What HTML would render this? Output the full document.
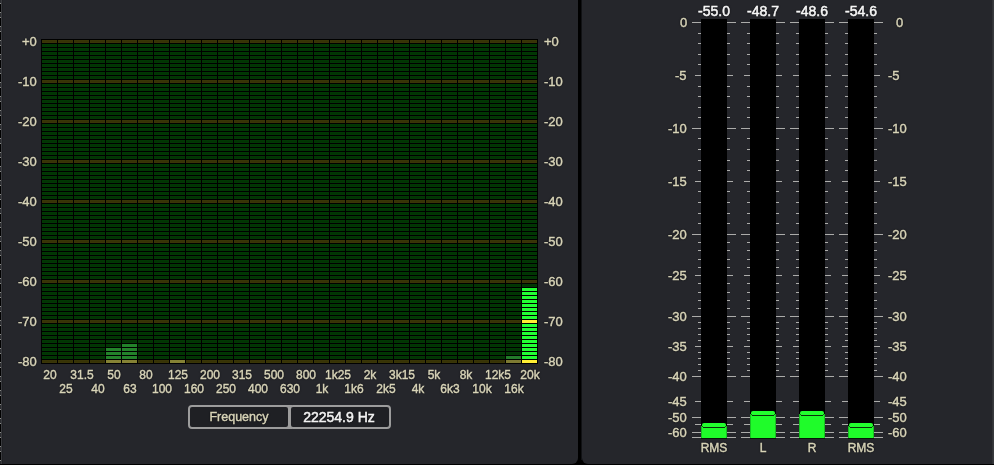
<!DOCTYPE html><html><head><meta charset="utf-8"><style>html,body{margin:0;padding:0;}body{width:994px;height:465px;position:relative;overflow:hidden;background:#000;font-family:"Liberation Sans",sans-serif;}.t{position:absolute;line-height:14px;white-space:nowrap;text-shadow:0 0 2px #000;will-change:transform;-webkit-text-stroke:0.4px currentColor;}.p{position:absolute;background:#25262b;}.k{position:absolute;height:1px;background:#acacaa;}</style></head><body>
<div class="p" style="left:2px;top:0;width:576px;height:464px;border-radius:0 0 6px 0;box-shadow:inset 1px 0 0 #202125"></div>
<div class="p" style="left:582px;top:0;width:412px;height:464px;border-radius:0 0 0 6px"></div>
<div style="position:absolute;left:581px;top:0;width:1px;height:460px;background:#111215"></div>
<div style="position:absolute;left:992px;top:0;width:2px;height:464px;background:linear-gradient(90deg,#2e2f33,#3c3d41)"></div>
<div style="position:absolute;left:1px;top:0;width:1px;height:464px;background:#3a3b3f"></div>
<div style="position:absolute;left:0;top:0;width:1px;height:464px;background:repeating-linear-gradient(180deg,#2a2b2f 0px,#2a2b2f 3px,#8a8a88 3px,#8a8a88 4px,#000 4px,#000 12px,#8a8a88 12px,#8a8a88 13px,#2a2b2f 13px,#2a2b2f 14px)"></div>
<svg width="497" height="325" style="position:absolute;left:41px;top:39px" shape-rendering="crispEdges"><defs><pattern id="pg" x="1" y="1" width="16" height="4" patternUnits="userSpaceOnUse"><rect x="0" y="0" width="15" height="3" fill="#023804"/><rect x="1" y="1" width="13" height="1" fill="#013503"/></pattern><pattern id="py" x="1" y="1" width="16" height="4" patternUnits="userSpaceOnUse"><rect x="0" y="0" width="15" height="3" fill="#3a3607"/><rect x="1" y="1" width="13" height="1" fill="#373306"/></pattern></defs><rect width="497" height="325" fill="#000"/><rect x="1" y="1" width="495" height="324" fill="url(#pg)"/><rect x="1" y="1" width="495" height="3" fill="url(#py)"/><rect x="1" y="41" width="495" height="3" fill="url(#py)"/><rect x="1" y="81" width="495" height="3" fill="url(#py)"/><rect x="1" y="121" width="495" height="3" fill="url(#py)"/><rect x="1" y="161" width="495" height="3" fill="url(#py)"/><rect x="1" y="201" width="495" height="3" fill="url(#py)"/><rect x="1" y="241" width="495" height="3" fill="url(#py)"/><rect x="1" y="281" width="495" height="3" fill="url(#py)"/><rect x="1" y="321" width="495" height="3" fill="url(#py)"/><rect x="65" y="309" width="15" height="3" fill="#23822a"/><rect x="65" y="313" width="15" height="3" fill="#23822a"/><rect x="65" y="317" width="15" height="3" fill="#23822a"/><rect x="65" y="321" width="15" height="3" fill="#858234"/><rect x="81" y="305" width="15" height="3" fill="#23822a"/><rect x="81" y="309" width="15" height="3" fill="#23822a"/><rect x="81" y="313" width="15" height="3" fill="#23822a"/><rect x="81" y="317" width="15" height="3" fill="#23822a"/><rect x="81" y="321" width="15" height="3" fill="#858234"/><rect x="129" y="321" width="15" height="3" fill="#858234"/><rect x="465" y="317" width="15" height="3" fill="#237a2a"/><rect x="465" y="321" width="15" height="3" fill="#7d7a32"/><rect x="481" y="249" width="15" height="3" fill="#22ff33"/><rect x="481" y="253" width="15" height="3" fill="#22ff33"/><rect x="481" y="257" width="15" height="3" fill="#22ff33"/><rect x="481" y="261" width="15" height="3" fill="#22ff33"/><rect x="481" y="265" width="15" height="3" fill="#22ff33"/><rect x="481" y="269" width="15" height="3" fill="#22ff33"/><rect x="481" y="273" width="15" height="3" fill="#22ff33"/><rect x="481" y="277" width="15" height="3" fill="#22ff33"/><rect x="481" y="281" width="15" height="3" fill="#ffee33"/><rect x="481" y="285" width="15" height="3" fill="#22ff33"/><rect x="481" y="289" width="15" height="3" fill="#22ff33"/><rect x="481" y="293" width="15" height="3" fill="#22ff33"/><rect x="481" y="297" width="15" height="3" fill="#22ff33"/><rect x="481" y="301" width="15" height="3" fill="#22ff33"/><rect x="481" y="305" width="15" height="3" fill="#22ff33"/><rect x="481" y="309" width="15" height="3" fill="#22ff33"/><rect x="481" y="313" width="15" height="3" fill="#22ff33"/><rect x="481" y="317" width="15" height="3" fill="#22ff33"/><rect x="481" y="321" width="15" height="3" fill="#ffee33"/></svg>
<div class="t" style="right:957px;top:35px;font-size:13px;color:#d8d4b8;font-weight:normal;">+0</div>
<div class="t" style="left:544px;top:35px;font-size:13px;color:#d8d4b8;font-weight:normal;">+0</div>
<div class="t" style="right:957px;top:75px;font-size:13px;color:#d8d4b8;font-weight:normal;">-10</div>
<div class="t" style="left:544px;top:75px;font-size:13px;color:#d8d4b8;font-weight:normal;">-10</div>
<div class="t" style="right:957px;top:115px;font-size:13px;color:#d8d4b8;font-weight:normal;">-20</div>
<div class="t" style="left:544px;top:115px;font-size:13px;color:#d8d4b8;font-weight:normal;">-20</div>
<div class="t" style="right:957px;top:155px;font-size:13px;color:#d8d4b8;font-weight:normal;">-30</div>
<div class="t" style="left:544px;top:155px;font-size:13px;color:#d8d4b8;font-weight:normal;">-30</div>
<div class="t" style="right:957px;top:195px;font-size:13px;color:#d8d4b8;font-weight:normal;">-40</div>
<div class="t" style="left:544px;top:195px;font-size:13px;color:#d8d4b8;font-weight:normal;">-40</div>
<div class="t" style="right:957px;top:235px;font-size:13px;color:#d8d4b8;font-weight:normal;">-50</div>
<div class="t" style="left:544px;top:235px;font-size:13px;color:#d8d4b8;font-weight:normal;">-50</div>
<div class="t" style="right:957px;top:275px;font-size:13px;color:#d8d4b8;font-weight:normal;">-60</div>
<div class="t" style="left:544px;top:275px;font-size:13px;color:#d8d4b8;font-weight:normal;">-60</div>
<div class="t" style="right:957px;top:315px;font-size:13px;color:#d8d4b8;font-weight:normal;">-70</div>
<div class="t" style="left:544px;top:315px;font-size:13px;color:#d8d4b8;font-weight:normal;">-70</div>
<div class="t" style="right:957px;top:355px;font-size:13px;color:#d8d4b8;font-weight:normal;">-80</div>
<div class="t" style="left:544px;top:355px;font-size:13px;color:#d8d4b8;font-weight:normal;">-80</div>
<div class="t" style="left:-0.5px;width:100px;text-align:center;top:368px;font-size:12px;color:#d8d4b8;font-weight:normal;">20</div>
<div class="t" style="left:15.5px;width:100px;text-align:center;top:382px;font-size:12px;color:#d8d4b8;font-weight:normal;">25</div>
<div class="t" style="left:31.5px;width:100px;text-align:center;top:368px;font-size:12px;color:#d8d4b8;font-weight:normal;">31.5</div>
<div class="t" style="left:47.5px;width:100px;text-align:center;top:382px;font-size:12px;color:#d8d4b8;font-weight:normal;">40</div>
<div class="t" style="left:63.5px;width:100px;text-align:center;top:368px;font-size:12px;color:#d8d4b8;font-weight:normal;">50</div>
<div class="t" style="left:79.5px;width:100px;text-align:center;top:382px;font-size:12px;color:#d8d4b8;font-weight:normal;">63</div>
<div class="t" style="left:95.5px;width:100px;text-align:center;top:368px;font-size:12px;color:#d8d4b8;font-weight:normal;">80</div>
<div class="t" style="left:111.5px;width:100px;text-align:center;top:382px;font-size:12px;color:#d8d4b8;font-weight:normal;">100</div>
<div class="t" style="left:127.5px;width:100px;text-align:center;top:368px;font-size:12px;color:#d8d4b8;font-weight:normal;">125</div>
<div class="t" style="left:143.5px;width:100px;text-align:center;top:382px;font-size:12px;color:#d8d4b8;font-weight:normal;">160</div>
<div class="t" style="left:159.5px;width:100px;text-align:center;top:368px;font-size:12px;color:#d8d4b8;font-weight:normal;">200</div>
<div class="t" style="left:175.5px;width:100px;text-align:center;top:382px;font-size:12px;color:#d8d4b8;font-weight:normal;">250</div>
<div class="t" style="left:191.5px;width:100px;text-align:center;top:368px;font-size:12px;color:#d8d4b8;font-weight:normal;">315</div>
<div class="t" style="left:207.5px;width:100px;text-align:center;top:382px;font-size:12px;color:#d8d4b8;font-weight:normal;">400</div>
<div class="t" style="left:223.5px;width:100px;text-align:center;top:368px;font-size:12px;color:#d8d4b8;font-weight:normal;">500</div>
<div class="t" style="left:239.5px;width:100px;text-align:center;top:382px;font-size:12px;color:#d8d4b8;font-weight:normal;">630</div>
<div class="t" style="left:255.5px;width:100px;text-align:center;top:368px;font-size:12px;color:#d8d4b8;font-weight:normal;">800</div>
<div class="t" style="left:271.5px;width:100px;text-align:center;top:382px;font-size:12px;color:#d8d4b8;font-weight:normal;">1k</div>
<div class="t" style="left:287.5px;width:100px;text-align:center;top:368px;font-size:12px;color:#d8d4b8;font-weight:normal;">1k25</div>
<div class="t" style="left:303.5px;width:100px;text-align:center;top:382px;font-size:12px;color:#d8d4b8;font-weight:normal;">1k6</div>
<div class="t" style="left:319.5px;width:100px;text-align:center;top:368px;font-size:12px;color:#d8d4b8;font-weight:normal;">2k</div>
<div class="t" style="left:335.5px;width:100px;text-align:center;top:382px;font-size:12px;color:#d8d4b8;font-weight:normal;">2k5</div>
<div class="t" style="left:351.5px;width:100px;text-align:center;top:368px;font-size:12px;color:#d8d4b8;font-weight:normal;">3k15</div>
<div class="t" style="left:367.5px;width:100px;text-align:center;top:382px;font-size:12px;color:#d8d4b8;font-weight:normal;">4k</div>
<div class="t" style="left:383.5px;width:100px;text-align:center;top:368px;font-size:12px;color:#d8d4b8;font-weight:normal;">5k</div>
<div class="t" style="left:399.5px;width:100px;text-align:center;top:382px;font-size:12px;color:#d8d4b8;font-weight:normal;">6k3</div>
<div class="t" style="left:415.5px;width:100px;text-align:center;top:368px;font-size:12px;color:#d8d4b8;font-weight:normal;">8k</div>
<div class="t" style="left:431.5px;width:100px;text-align:center;top:382px;font-size:12px;color:#d8d4b8;font-weight:normal;">10k</div>
<div class="t" style="left:447.5px;width:100px;text-align:center;top:368px;font-size:12px;color:#d8d4b8;font-weight:normal;">12k5</div>
<div class="t" style="left:463.5px;width:100px;text-align:center;top:382px;font-size:12px;color:#d8d4b8;font-weight:normal;">16k</div>
<div class="t" style="left:479.5px;width:100px;text-align:center;top:368px;font-size:12px;color:#d8d4b8;font-weight:normal;">20k</div>
<div style="position:absolute;left:286px;top:405px;width:6px;height:24px;background:#9c9c9c"></div>
<div style="position:absolute;left:188px;top:405px;width:98px;height:20px;border:2px solid #9c9c9c;border-radius:4px;background:#1f2024"></div>
<div style="position:absolute;left:289px;top:405px;width:98px;height:20px;border:2px solid #9c9c9c;border-radius:4px;background:#1f2024"></div>
<div class="t" style="left:188.5px;width:100px;text-align:center;top:410px;font-size:12.5px;color:#d8d4b8;font-weight:normal;">Frequency</div>
<div class="t" style="left:289px;width:100px;text-align:center;top:410px;font-size:14px;color:#f2f2f2;font-weight:normal;-webkit-text-stroke:0.5px #f2f2f2;">22254.9 Hz</div>
<div style="position:absolute;left:701px;top:19px;width:26px;height:420px;background:#000"></div>
<div class="t" style="left:664px;width:100px;text-align:center;top:4px;font-size:14px;color:#f6f6f6;font-weight:normal;-webkit-text-stroke:0.5px #f6f6f6;">-55.0</div>
<div class="t" style="left:664px;width:100px;text-align:center;top:441px;font-size:12px;color:#d8d4b8;font-weight:normal;">RMS</div>
<div style="position:absolute;left:701px;top:426px;width:26px;height:13px;background:#1ffc2a;box-shadow:inset 0 -1px 0 #061806,inset 1px 0 0 #18c022,inset -1px 0 0 #18c022"></div>
<div style="position:absolute;left:702px;top:423px;width:24px;height:4px;background:#22ff2e;border-radius:2px 2px 0 0"></div>
<div style="position:absolute;left:703px;top:427px;width:22px;height:1px;background:#0a300a"></div>
<div style="position:absolute;left:702px;top:426px;width:1px;height:1px;background:#0f6a12"></div>
<div style="position:absolute;left:725px;top:426px;width:1px;height:1px;background:#0f6a12"></div>
<div style="position:absolute;left:750px;top:19px;width:26px;height:420px;background:#000"></div>
<div class="t" style="left:713px;width:100px;text-align:center;top:4px;font-size:14px;color:#f6f6f6;font-weight:normal;-webkit-text-stroke:0.5px #f6f6f6;">-48.7</div>
<div class="t" style="left:713px;width:100px;text-align:center;top:441px;font-size:12px;color:#d8d4b8;font-weight:normal;">L</div>
<div style="position:absolute;left:750px;top:414px;width:26px;height:25px;background:#1ffc2a;box-shadow:inset 0 -1px 0 #061806,inset 1px 0 0 #18c022,inset -1px 0 0 #18c022"></div>
<div style="position:absolute;left:751px;top:411px;width:24px;height:4px;background:#22ff2e;border-radius:2px 2px 0 0"></div>
<div style="position:absolute;left:752px;top:415px;width:22px;height:1px;background:#0a300a"></div>
<div style="position:absolute;left:751px;top:414px;width:1px;height:1px;background:#0f6a12"></div>
<div style="position:absolute;left:774px;top:414px;width:1px;height:1px;background:#0f6a12"></div>
<div style="position:absolute;left:799px;top:19px;width:26px;height:420px;background:#000"></div>
<div class="t" style="left:762px;width:100px;text-align:center;top:4px;font-size:14px;color:#f6f6f6;font-weight:normal;-webkit-text-stroke:0.5px #f6f6f6;">-48.6</div>
<div class="t" style="left:762px;width:100px;text-align:center;top:441px;font-size:12px;color:#d8d4b8;font-weight:normal;">R</div>
<div style="position:absolute;left:799px;top:414px;width:26px;height:25px;background:#1ffc2a;box-shadow:inset 0 -1px 0 #061806,inset 1px 0 0 #18c022,inset -1px 0 0 #18c022"></div>
<div style="position:absolute;left:800px;top:411px;width:24px;height:4px;background:#22ff2e;border-radius:2px 2px 0 0"></div>
<div style="position:absolute;left:801px;top:415px;width:22px;height:1px;background:#0a300a"></div>
<div style="position:absolute;left:800px;top:414px;width:1px;height:1px;background:#0f6a12"></div>
<div style="position:absolute;left:823px;top:414px;width:1px;height:1px;background:#0f6a12"></div>
<div style="position:absolute;left:848px;top:19px;width:26px;height:420px;background:#000"></div>
<div class="t" style="left:811px;width:100px;text-align:center;top:4px;font-size:14px;color:#f6f6f6;font-weight:normal;-webkit-text-stroke:0.5px #f6f6f6;">-54.6</div>
<div class="t" style="left:811px;width:100px;text-align:center;top:441px;font-size:12px;color:#d8d4b8;font-weight:normal;">RMS</div>
<div style="position:absolute;left:848px;top:426px;width:26px;height:13px;background:#1ffc2a;box-shadow:inset 0 -1px 0 #061806,inset 1px 0 0 #18c022,inset -1px 0 0 #18c022"></div>
<div style="position:absolute;left:849px;top:423px;width:24px;height:4px;background:#22ff2e;border-radius:2px 2px 0 0"></div>
<div style="position:absolute;left:850px;top:427px;width:22px;height:1px;background:#0a300a"></div>
<div style="position:absolute;left:849px;top:426px;width:1px;height:1px;background:#0f6a12"></div>
<div style="position:absolute;left:872px;top:426px;width:1px;height:1px;background:#0f6a12"></div>
<div class="k" style="left:692px;top:22px;width:9px"></div>
<div class="k" style="left:727px;top:22px;width:9px"></div>
<div class="k" style="left:741px;top:22px;width:9px"></div>
<div class="k" style="left:776px;top:22px;width:9px"></div>
<div class="k" style="left:790px;top:22px;width:9px"></div>
<div class="k" style="left:825px;top:22px;width:9px"></div>
<div class="k" style="left:839px;top:22px;width:9px"></div>
<div class="k" style="left:874px;top:22px;width:9px"></div>
<div class="k" style="left:698px;top:33px;width:3px"></div>
<div class="k" style="left:727px;top:33px;width:3px"></div>
<div class="k" style="left:747px;top:33px;width:3px"></div>
<div class="k" style="left:776px;top:33px;width:3px"></div>
<div class="k" style="left:796px;top:33px;width:3px"></div>
<div class="k" style="left:825px;top:33px;width:3px"></div>
<div class="k" style="left:845px;top:33px;width:3px"></div>
<div class="k" style="left:874px;top:33px;width:3px"></div>
<div class="k" style="left:698px;top:43px;width:3px"></div>
<div class="k" style="left:727px;top:43px;width:3px"></div>
<div class="k" style="left:747px;top:43px;width:3px"></div>
<div class="k" style="left:776px;top:43px;width:3px"></div>
<div class="k" style="left:796px;top:43px;width:3px"></div>
<div class="k" style="left:825px;top:43px;width:3px"></div>
<div class="k" style="left:845px;top:43px;width:3px"></div>
<div class="k" style="left:874px;top:43px;width:3px"></div>
<div class="k" style="left:698px;top:54px;width:3px"></div>
<div class="k" style="left:727px;top:54px;width:3px"></div>
<div class="k" style="left:747px;top:54px;width:3px"></div>
<div class="k" style="left:776px;top:54px;width:3px"></div>
<div class="k" style="left:796px;top:54px;width:3px"></div>
<div class="k" style="left:825px;top:54px;width:3px"></div>
<div class="k" style="left:845px;top:54px;width:3px"></div>
<div class="k" style="left:874px;top:54px;width:3px"></div>
<div class="k" style="left:698px;top:64px;width:3px"></div>
<div class="k" style="left:727px;top:64px;width:3px"></div>
<div class="k" style="left:747px;top:64px;width:3px"></div>
<div class="k" style="left:776px;top:64px;width:3px"></div>
<div class="k" style="left:796px;top:64px;width:3px"></div>
<div class="k" style="left:825px;top:64px;width:3px"></div>
<div class="k" style="left:845px;top:64px;width:3px"></div>
<div class="k" style="left:874px;top:64px;width:3px"></div>
<div class="k" style="left:695px;top:75px;width:6px"></div>
<div class="k" style="left:727px;top:75px;width:6px"></div>
<div class="k" style="left:744px;top:75px;width:6px"></div>
<div class="k" style="left:776px;top:75px;width:6px"></div>
<div class="k" style="left:793px;top:75px;width:6px"></div>
<div class="k" style="left:825px;top:75px;width:6px"></div>
<div class="k" style="left:842px;top:75px;width:6px"></div>
<div class="k" style="left:874px;top:75px;width:6px"></div>
<div class="k" style="left:698px;top:86px;width:3px"></div>
<div class="k" style="left:727px;top:86px;width:3px"></div>
<div class="k" style="left:747px;top:86px;width:3px"></div>
<div class="k" style="left:776px;top:86px;width:3px"></div>
<div class="k" style="left:796px;top:86px;width:3px"></div>
<div class="k" style="left:825px;top:86px;width:3px"></div>
<div class="k" style="left:845px;top:86px;width:3px"></div>
<div class="k" style="left:874px;top:86px;width:3px"></div>
<div class="k" style="left:698px;top:96px;width:3px"></div>
<div class="k" style="left:727px;top:96px;width:3px"></div>
<div class="k" style="left:747px;top:96px;width:3px"></div>
<div class="k" style="left:776px;top:96px;width:3px"></div>
<div class="k" style="left:796px;top:96px;width:3px"></div>
<div class="k" style="left:825px;top:96px;width:3px"></div>
<div class="k" style="left:845px;top:96px;width:3px"></div>
<div class="k" style="left:874px;top:96px;width:3px"></div>
<div class="k" style="left:698px;top:107px;width:3px"></div>
<div class="k" style="left:727px;top:107px;width:3px"></div>
<div class="k" style="left:747px;top:107px;width:3px"></div>
<div class="k" style="left:776px;top:107px;width:3px"></div>
<div class="k" style="left:796px;top:107px;width:3px"></div>
<div class="k" style="left:825px;top:107px;width:3px"></div>
<div class="k" style="left:845px;top:107px;width:3px"></div>
<div class="k" style="left:874px;top:107px;width:3px"></div>
<div class="k" style="left:698px;top:117px;width:3px"></div>
<div class="k" style="left:727px;top:117px;width:3px"></div>
<div class="k" style="left:747px;top:117px;width:3px"></div>
<div class="k" style="left:776px;top:117px;width:3px"></div>
<div class="k" style="left:796px;top:117px;width:3px"></div>
<div class="k" style="left:825px;top:117px;width:3px"></div>
<div class="k" style="left:845px;top:117px;width:3px"></div>
<div class="k" style="left:874px;top:117px;width:3px"></div>
<div class="k" style="left:692px;top:128px;width:9px"></div>
<div class="k" style="left:727px;top:128px;width:9px"></div>
<div class="k" style="left:741px;top:128px;width:9px"></div>
<div class="k" style="left:776px;top:128px;width:9px"></div>
<div class="k" style="left:790px;top:128px;width:9px"></div>
<div class="k" style="left:825px;top:128px;width:9px"></div>
<div class="k" style="left:839px;top:128px;width:9px"></div>
<div class="k" style="left:874px;top:128px;width:9px"></div>
<div class="k" style="left:698px;top:138px;width:3px"></div>
<div class="k" style="left:727px;top:138px;width:3px"></div>
<div class="k" style="left:747px;top:138px;width:3px"></div>
<div class="k" style="left:776px;top:138px;width:3px"></div>
<div class="k" style="left:796px;top:138px;width:3px"></div>
<div class="k" style="left:825px;top:138px;width:3px"></div>
<div class="k" style="left:845px;top:138px;width:3px"></div>
<div class="k" style="left:874px;top:138px;width:3px"></div>
<div class="k" style="left:698px;top:149px;width:3px"></div>
<div class="k" style="left:727px;top:149px;width:3px"></div>
<div class="k" style="left:747px;top:149px;width:3px"></div>
<div class="k" style="left:776px;top:149px;width:3px"></div>
<div class="k" style="left:796px;top:149px;width:3px"></div>
<div class="k" style="left:825px;top:149px;width:3px"></div>
<div class="k" style="left:845px;top:149px;width:3px"></div>
<div class="k" style="left:874px;top:149px;width:3px"></div>
<div class="k" style="left:698px;top:160px;width:3px"></div>
<div class="k" style="left:727px;top:160px;width:3px"></div>
<div class="k" style="left:747px;top:160px;width:3px"></div>
<div class="k" style="left:776px;top:160px;width:3px"></div>
<div class="k" style="left:796px;top:160px;width:3px"></div>
<div class="k" style="left:825px;top:160px;width:3px"></div>
<div class="k" style="left:845px;top:160px;width:3px"></div>
<div class="k" style="left:874px;top:160px;width:3px"></div>
<div class="k" style="left:698px;top:170px;width:3px"></div>
<div class="k" style="left:727px;top:170px;width:3px"></div>
<div class="k" style="left:747px;top:170px;width:3px"></div>
<div class="k" style="left:776px;top:170px;width:3px"></div>
<div class="k" style="left:796px;top:170px;width:3px"></div>
<div class="k" style="left:825px;top:170px;width:3px"></div>
<div class="k" style="left:845px;top:170px;width:3px"></div>
<div class="k" style="left:874px;top:170px;width:3px"></div>
<div class="k" style="left:695px;top:181px;width:6px"></div>
<div class="k" style="left:727px;top:181px;width:6px"></div>
<div class="k" style="left:744px;top:181px;width:6px"></div>
<div class="k" style="left:776px;top:181px;width:6px"></div>
<div class="k" style="left:793px;top:181px;width:6px"></div>
<div class="k" style="left:825px;top:181px;width:6px"></div>
<div class="k" style="left:842px;top:181px;width:6px"></div>
<div class="k" style="left:874px;top:181px;width:6px"></div>
<div class="k" style="left:698px;top:191px;width:3px"></div>
<div class="k" style="left:727px;top:191px;width:3px"></div>
<div class="k" style="left:747px;top:191px;width:3px"></div>
<div class="k" style="left:776px;top:191px;width:3px"></div>
<div class="k" style="left:796px;top:191px;width:3px"></div>
<div class="k" style="left:825px;top:191px;width:3px"></div>
<div class="k" style="left:845px;top:191px;width:3px"></div>
<div class="k" style="left:874px;top:191px;width:3px"></div>
<div class="k" style="left:698px;top:202px;width:3px"></div>
<div class="k" style="left:727px;top:202px;width:3px"></div>
<div class="k" style="left:747px;top:202px;width:3px"></div>
<div class="k" style="left:776px;top:202px;width:3px"></div>
<div class="k" style="left:796px;top:202px;width:3px"></div>
<div class="k" style="left:825px;top:202px;width:3px"></div>
<div class="k" style="left:845px;top:202px;width:3px"></div>
<div class="k" style="left:874px;top:202px;width:3px"></div>
<div class="k" style="left:698px;top:213px;width:3px"></div>
<div class="k" style="left:727px;top:213px;width:3px"></div>
<div class="k" style="left:747px;top:213px;width:3px"></div>
<div class="k" style="left:776px;top:213px;width:3px"></div>
<div class="k" style="left:796px;top:213px;width:3px"></div>
<div class="k" style="left:825px;top:213px;width:3px"></div>
<div class="k" style="left:845px;top:213px;width:3px"></div>
<div class="k" style="left:874px;top:213px;width:3px"></div>
<div class="k" style="left:698px;top:223px;width:3px"></div>
<div class="k" style="left:727px;top:223px;width:3px"></div>
<div class="k" style="left:747px;top:223px;width:3px"></div>
<div class="k" style="left:776px;top:223px;width:3px"></div>
<div class="k" style="left:796px;top:223px;width:3px"></div>
<div class="k" style="left:825px;top:223px;width:3px"></div>
<div class="k" style="left:845px;top:223px;width:3px"></div>
<div class="k" style="left:874px;top:223px;width:3px"></div>
<div class="k" style="left:692px;top:234px;width:9px"></div>
<div class="k" style="left:727px;top:234px;width:9px"></div>
<div class="k" style="left:741px;top:234px;width:9px"></div>
<div class="k" style="left:776px;top:234px;width:9px"></div>
<div class="k" style="left:790px;top:234px;width:9px"></div>
<div class="k" style="left:825px;top:234px;width:9px"></div>
<div class="k" style="left:839px;top:234px;width:9px"></div>
<div class="k" style="left:874px;top:234px;width:9px"></div>
<div class="k" style="left:698px;top:242px;width:3px"></div>
<div class="k" style="left:727px;top:242px;width:3px"></div>
<div class="k" style="left:747px;top:242px;width:3px"></div>
<div class="k" style="left:776px;top:242px;width:3px"></div>
<div class="k" style="left:796px;top:242px;width:3px"></div>
<div class="k" style="left:825px;top:242px;width:3px"></div>
<div class="k" style="left:845px;top:242px;width:3px"></div>
<div class="k" style="left:874px;top:242px;width:3px"></div>
<div class="k" style="left:698px;top:250px;width:3px"></div>
<div class="k" style="left:727px;top:250px;width:3px"></div>
<div class="k" style="left:747px;top:250px;width:3px"></div>
<div class="k" style="left:776px;top:250px;width:3px"></div>
<div class="k" style="left:796px;top:250px;width:3px"></div>
<div class="k" style="left:825px;top:250px;width:3px"></div>
<div class="k" style="left:845px;top:250px;width:3px"></div>
<div class="k" style="left:874px;top:250px;width:3px"></div>
<div class="k" style="left:698px;top:259px;width:3px"></div>
<div class="k" style="left:727px;top:259px;width:3px"></div>
<div class="k" style="left:747px;top:259px;width:3px"></div>
<div class="k" style="left:776px;top:259px;width:3px"></div>
<div class="k" style="left:796px;top:259px;width:3px"></div>
<div class="k" style="left:825px;top:259px;width:3px"></div>
<div class="k" style="left:845px;top:259px;width:3px"></div>
<div class="k" style="left:874px;top:259px;width:3px"></div>
<div class="k" style="left:698px;top:267px;width:3px"></div>
<div class="k" style="left:727px;top:267px;width:3px"></div>
<div class="k" style="left:747px;top:267px;width:3px"></div>
<div class="k" style="left:776px;top:267px;width:3px"></div>
<div class="k" style="left:796px;top:267px;width:3px"></div>
<div class="k" style="left:825px;top:267px;width:3px"></div>
<div class="k" style="left:845px;top:267px;width:3px"></div>
<div class="k" style="left:874px;top:267px;width:3px"></div>
<div class="k" style="left:695px;top:275px;width:6px"></div>
<div class="k" style="left:727px;top:275px;width:6px"></div>
<div class="k" style="left:744px;top:275px;width:6px"></div>
<div class="k" style="left:776px;top:275px;width:6px"></div>
<div class="k" style="left:793px;top:275px;width:6px"></div>
<div class="k" style="left:825px;top:275px;width:6px"></div>
<div class="k" style="left:842px;top:275px;width:6px"></div>
<div class="k" style="left:874px;top:275px;width:6px"></div>
<div class="k" style="left:698px;top:283px;width:3px"></div>
<div class="k" style="left:727px;top:283px;width:3px"></div>
<div class="k" style="left:747px;top:283px;width:3px"></div>
<div class="k" style="left:776px;top:283px;width:3px"></div>
<div class="k" style="left:796px;top:283px;width:3px"></div>
<div class="k" style="left:825px;top:283px;width:3px"></div>
<div class="k" style="left:845px;top:283px;width:3px"></div>
<div class="k" style="left:874px;top:283px;width:3px"></div>
<div class="k" style="left:698px;top:292px;width:3px"></div>
<div class="k" style="left:727px;top:292px;width:3px"></div>
<div class="k" style="left:747px;top:292px;width:3px"></div>
<div class="k" style="left:776px;top:292px;width:3px"></div>
<div class="k" style="left:796px;top:292px;width:3px"></div>
<div class="k" style="left:825px;top:292px;width:3px"></div>
<div class="k" style="left:845px;top:292px;width:3px"></div>
<div class="k" style="left:874px;top:292px;width:3px"></div>
<div class="k" style="left:698px;top:300px;width:3px"></div>
<div class="k" style="left:727px;top:300px;width:3px"></div>
<div class="k" style="left:747px;top:300px;width:3px"></div>
<div class="k" style="left:776px;top:300px;width:3px"></div>
<div class="k" style="left:796px;top:300px;width:3px"></div>
<div class="k" style="left:825px;top:300px;width:3px"></div>
<div class="k" style="left:845px;top:300px;width:3px"></div>
<div class="k" style="left:874px;top:300px;width:3px"></div>
<div class="k" style="left:698px;top:308px;width:3px"></div>
<div class="k" style="left:727px;top:308px;width:3px"></div>
<div class="k" style="left:747px;top:308px;width:3px"></div>
<div class="k" style="left:776px;top:308px;width:3px"></div>
<div class="k" style="left:796px;top:308px;width:3px"></div>
<div class="k" style="left:825px;top:308px;width:3px"></div>
<div class="k" style="left:845px;top:308px;width:3px"></div>
<div class="k" style="left:874px;top:308px;width:3px"></div>
<div class="k" style="left:692px;top:316px;width:9px"></div>
<div class="k" style="left:727px;top:316px;width:9px"></div>
<div class="k" style="left:741px;top:316px;width:9px"></div>
<div class="k" style="left:776px;top:316px;width:9px"></div>
<div class="k" style="left:790px;top:316px;width:9px"></div>
<div class="k" style="left:825px;top:316px;width:9px"></div>
<div class="k" style="left:839px;top:316px;width:9px"></div>
<div class="k" style="left:874px;top:316px;width:9px"></div>
<div class="k" style="left:698px;top:322px;width:3px"></div>
<div class="k" style="left:727px;top:322px;width:3px"></div>
<div class="k" style="left:747px;top:322px;width:3px"></div>
<div class="k" style="left:776px;top:322px;width:3px"></div>
<div class="k" style="left:796px;top:322px;width:3px"></div>
<div class="k" style="left:825px;top:322px;width:3px"></div>
<div class="k" style="left:845px;top:322px;width:3px"></div>
<div class="k" style="left:874px;top:322px;width:3px"></div>
<div class="k" style="left:698px;top:328px;width:3px"></div>
<div class="k" style="left:727px;top:328px;width:3px"></div>
<div class="k" style="left:747px;top:328px;width:3px"></div>
<div class="k" style="left:776px;top:328px;width:3px"></div>
<div class="k" style="left:796px;top:328px;width:3px"></div>
<div class="k" style="left:825px;top:328px;width:3px"></div>
<div class="k" style="left:845px;top:328px;width:3px"></div>
<div class="k" style="left:874px;top:328px;width:3px"></div>
<div class="k" style="left:698px;top:334px;width:3px"></div>
<div class="k" style="left:727px;top:334px;width:3px"></div>
<div class="k" style="left:747px;top:334px;width:3px"></div>
<div class="k" style="left:776px;top:334px;width:3px"></div>
<div class="k" style="left:796px;top:334px;width:3px"></div>
<div class="k" style="left:825px;top:334px;width:3px"></div>
<div class="k" style="left:845px;top:334px;width:3px"></div>
<div class="k" style="left:874px;top:334px;width:3px"></div>
<div class="k" style="left:698px;top:340px;width:3px"></div>
<div class="k" style="left:727px;top:340px;width:3px"></div>
<div class="k" style="left:747px;top:340px;width:3px"></div>
<div class="k" style="left:776px;top:340px;width:3px"></div>
<div class="k" style="left:796px;top:340px;width:3px"></div>
<div class="k" style="left:825px;top:340px;width:3px"></div>
<div class="k" style="left:845px;top:340px;width:3px"></div>
<div class="k" style="left:874px;top:340px;width:3px"></div>
<div class="k" style="left:695px;top:346px;width:6px"></div>
<div class="k" style="left:727px;top:346px;width:6px"></div>
<div class="k" style="left:744px;top:346px;width:6px"></div>
<div class="k" style="left:776px;top:346px;width:6px"></div>
<div class="k" style="left:793px;top:346px;width:6px"></div>
<div class="k" style="left:825px;top:346px;width:6px"></div>
<div class="k" style="left:842px;top:346px;width:6px"></div>
<div class="k" style="left:874px;top:346px;width:6px"></div>
<div class="k" style="left:698px;top:352px;width:3px"></div>
<div class="k" style="left:727px;top:352px;width:3px"></div>
<div class="k" style="left:747px;top:352px;width:3px"></div>
<div class="k" style="left:776px;top:352px;width:3px"></div>
<div class="k" style="left:796px;top:352px;width:3px"></div>
<div class="k" style="left:825px;top:352px;width:3px"></div>
<div class="k" style="left:845px;top:352px;width:3px"></div>
<div class="k" style="left:874px;top:352px;width:3px"></div>
<div class="k" style="left:698px;top:358px;width:3px"></div>
<div class="k" style="left:727px;top:358px;width:3px"></div>
<div class="k" style="left:747px;top:358px;width:3px"></div>
<div class="k" style="left:776px;top:358px;width:3px"></div>
<div class="k" style="left:796px;top:358px;width:3px"></div>
<div class="k" style="left:825px;top:358px;width:3px"></div>
<div class="k" style="left:845px;top:358px;width:3px"></div>
<div class="k" style="left:874px;top:358px;width:3px"></div>
<div class="k" style="left:698px;top:364px;width:3px"></div>
<div class="k" style="left:727px;top:364px;width:3px"></div>
<div class="k" style="left:747px;top:364px;width:3px"></div>
<div class="k" style="left:776px;top:364px;width:3px"></div>
<div class="k" style="left:796px;top:364px;width:3px"></div>
<div class="k" style="left:825px;top:364px;width:3px"></div>
<div class="k" style="left:845px;top:364px;width:3px"></div>
<div class="k" style="left:874px;top:364px;width:3px"></div>
<div class="k" style="left:698px;top:370px;width:3px"></div>
<div class="k" style="left:727px;top:370px;width:3px"></div>
<div class="k" style="left:747px;top:370px;width:3px"></div>
<div class="k" style="left:776px;top:370px;width:3px"></div>
<div class="k" style="left:796px;top:370px;width:3px"></div>
<div class="k" style="left:825px;top:370px;width:3px"></div>
<div class="k" style="left:845px;top:370px;width:3px"></div>
<div class="k" style="left:874px;top:370px;width:3px"></div>
<div class="k" style="left:692px;top:376px;width:9px"></div>
<div class="k" style="left:727px;top:376px;width:9px"></div>
<div class="k" style="left:741px;top:376px;width:9px"></div>
<div class="k" style="left:776px;top:376px;width:9px"></div>
<div class="k" style="left:790px;top:376px;width:9px"></div>
<div class="k" style="left:825px;top:376px;width:9px"></div>
<div class="k" style="left:839px;top:376px;width:9px"></div>
<div class="k" style="left:874px;top:376px;width:9px"></div>
<div class="k" style="left:695px;top:401px;width:6px"></div>
<div class="k" style="left:727px;top:401px;width:6px"></div>
<div class="k" style="left:744px;top:401px;width:6px"></div>
<div class="k" style="left:776px;top:401px;width:6px"></div>
<div class="k" style="left:793px;top:401px;width:6px"></div>
<div class="k" style="left:825px;top:401px;width:6px"></div>
<div class="k" style="left:842px;top:401px;width:6px"></div>
<div class="k" style="left:874px;top:401px;width:6px"></div>
<div class="k" style="left:692px;top:417px;width:9px"></div>
<div class="k" style="left:727px;top:417px;width:9px"></div>
<div class="k" style="left:741px;top:417px;width:9px"></div>
<div class="k" style="left:776px;top:417px;width:9px"></div>
<div class="k" style="left:790px;top:417px;width:9px"></div>
<div class="k" style="left:825px;top:417px;width:9px"></div>
<div class="k" style="left:839px;top:417px;width:9px"></div>
<div class="k" style="left:874px;top:417px;width:9px"></div>
<div class="k" style="left:695px;top:424px;width:6px"></div>
<div class="k" style="left:727px;top:424px;width:6px"></div>
<div class="k" style="left:744px;top:424px;width:6px"></div>
<div class="k" style="left:776px;top:424px;width:6px"></div>
<div class="k" style="left:793px;top:424px;width:6px"></div>
<div class="k" style="left:825px;top:424px;width:6px"></div>
<div class="k" style="left:842px;top:424px;width:6px"></div>
<div class="k" style="left:874px;top:424px;width:6px"></div>
<div class="k" style="left:692px;top:432px;width:9px"></div>
<div class="k" style="left:727px;top:432px;width:9px"></div>
<div class="k" style="left:741px;top:432px;width:9px"></div>
<div class="k" style="left:776px;top:432px;width:9px"></div>
<div class="k" style="left:790px;top:432px;width:9px"></div>
<div class="k" style="left:825px;top:432px;width:9px"></div>
<div class="k" style="left:839px;top:432px;width:9px"></div>
<div class="k" style="left:874px;top:432px;width:9px"></div>
<div class="k" style="left:692px;top:437px;width:9px"></div>
<div class="k" style="left:727px;top:437px;width:9px"></div>
<div class="k" style="left:741px;top:437px;width:9px"></div>
<div class="k" style="left:776px;top:437px;width:9px"></div>
<div class="k" style="left:790px;top:437px;width:9px"></div>
<div class="k" style="left:825px;top:437px;width:9px"></div>
<div class="k" style="left:839px;top:437px;width:9px"></div>
<div class="k" style="left:874px;top:437px;width:9px"></div>
<div class="t" style="right:307px;top:16px;font-size:13px;color:#d8d4b8;font-weight:normal;">0</div>
<div class="t" style="left:896px;top:16px;font-size:13px;color:#d8d4b8;font-weight:normal;">0</div>
<div class="t" style="right:307px;top:69px;font-size:13px;color:#d8d4b8;font-weight:normal;">-5</div>
<div class="t" style="left:888px;top:69px;font-size:13px;color:#d8d4b8;font-weight:normal;">-5</div>
<div class="t" style="right:307px;top:122px;font-size:13px;color:#d8d4b8;font-weight:normal;">-10</div>
<div class="t" style="left:888px;top:122px;font-size:13px;color:#d8d4b8;font-weight:normal;">-10</div>
<div class="t" style="right:307px;top:175px;font-size:13px;color:#d8d4b8;font-weight:normal;">-15</div>
<div class="t" style="left:888px;top:175px;font-size:13px;color:#d8d4b8;font-weight:normal;">-15</div>
<div class="t" style="right:307px;top:228px;font-size:13px;color:#d8d4b8;font-weight:normal;">-20</div>
<div class="t" style="left:888px;top:228px;font-size:13px;color:#d8d4b8;font-weight:normal;">-20</div>
<div class="t" style="right:307px;top:269px;font-size:13px;color:#d8d4b8;font-weight:normal;">-25</div>
<div class="t" style="left:888px;top:269px;font-size:13px;color:#d8d4b8;font-weight:normal;">-25</div>
<div class="t" style="right:307px;top:310px;font-size:13px;color:#d8d4b8;font-weight:normal;">-30</div>
<div class="t" style="left:888px;top:310px;font-size:13px;color:#d8d4b8;font-weight:normal;">-30</div>
<div class="t" style="right:307px;top:340px;font-size:13px;color:#d8d4b8;font-weight:normal;">-35</div>
<div class="t" style="left:888px;top:340px;font-size:13px;color:#d8d4b8;font-weight:normal;">-35</div>
<div class="t" style="right:307px;top:370px;font-size:13px;color:#d8d4b8;font-weight:normal;">-40</div>
<div class="t" style="left:888px;top:370px;font-size:13px;color:#d8d4b8;font-weight:normal;">-40</div>
<div class="t" style="right:307px;top:395px;font-size:13px;color:#d8d4b8;font-weight:normal;">-45</div>
<div class="t" style="left:888px;top:395px;font-size:13px;color:#d8d4b8;font-weight:normal;">-45</div>
<div class="t" style="right:307px;top:411px;font-size:13px;color:#d8d4b8;font-weight:normal;">-50</div>
<div class="t" style="left:888px;top:411px;font-size:13px;color:#d8d4b8;font-weight:normal;">-50</div>
<div class="t" style="right:307px;top:426px;font-size:13px;color:#d8d4b8;font-weight:normal;">-60</div>
<div class="t" style="left:888px;top:426px;font-size:13px;color:#d8d4b8;font-weight:normal;">-60</div>
</body></html>
